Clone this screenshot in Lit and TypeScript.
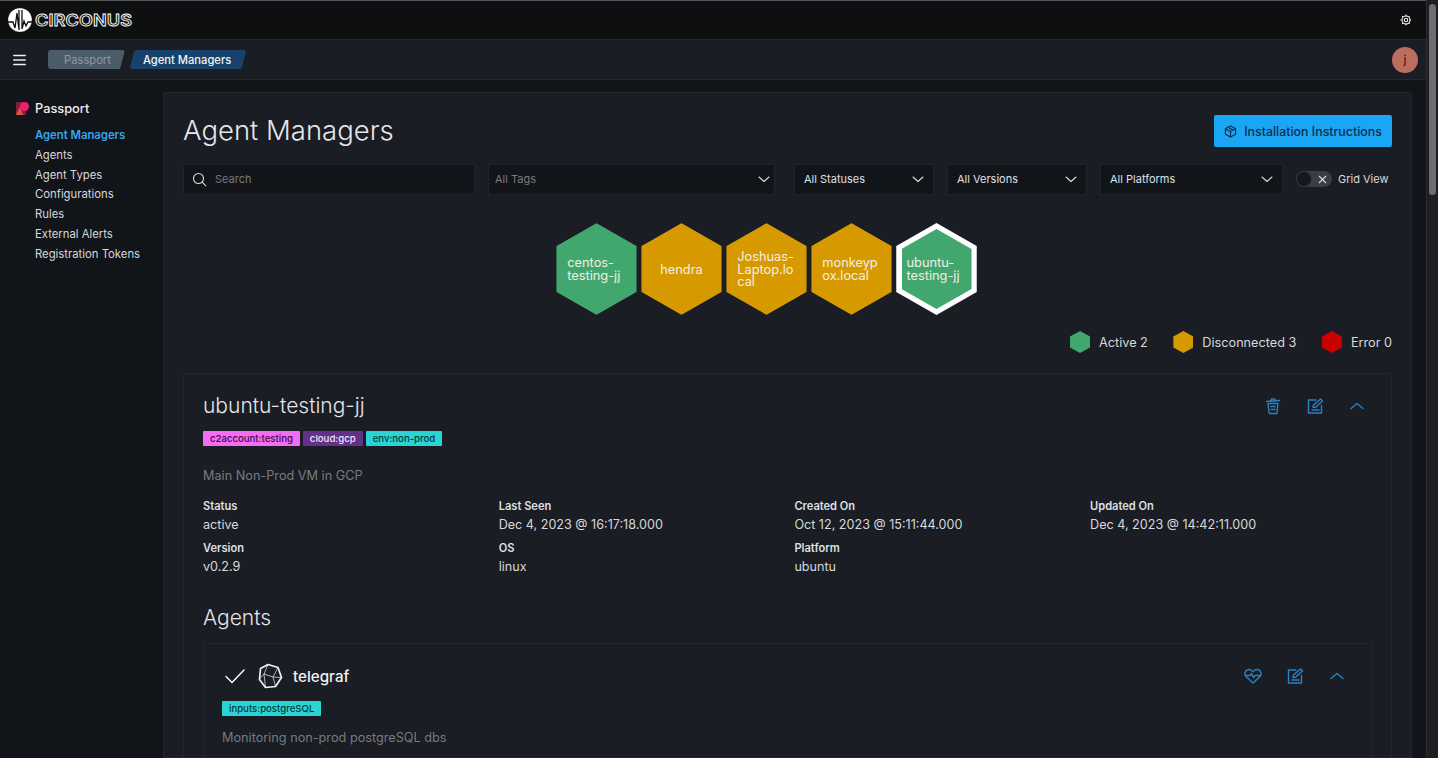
import { LitElement, html, css, svg } from 'lit';
import { customElement } from 'lit/decorators.js';

interface Hex {
  name: string;
  color: string;
  selected?: boolean;
}

const hexes: Hex[] = [
  { name: 'centos-testing-jj', color: '#41a76f' },
  { name: 'hendra', color: '#d69a00' },
  { name: 'Joshuas-Laptop.local', color: '#d69a00' },
  { name: 'monkeypox.local', color: '#d69a00' },
  { name: 'ubuntu-testing-jj', color: '#41a76f', selected: true },
];

const legend = [
  { label: 'Active 2', color: '#41a76f' },
  { label: 'Disconnected 3', color: '#d69a00' },
  { label: 'Error 0', color: '#c90000' },
];

const navItems = ['Agent Managers', 'Agents', 'Agent Types', 'Configurations', 'Rules', 'External Alerts', 'Registration Tokens'];

const chevronDown = svg`<path d="M2 5l5 4.500L12 5" fill="none" stroke="currentColor" stroke-width="1.1" stroke-linecap="round" stroke-linejoin="round"/>`;

@customElement('app-root')
export class AppRoot extends LitElement {
  static styles = css`
    :host {
      display: flex;
      width: 1438px;
      height: 758px;
      overflow: hidden;
      background: #111418;
      color: #e4e6ea;
      font-family: Inter, 'Liberation Sans', sans-serif;
      font-size: 13px;
    }
    svg { display: block; flex: none; }
    .page { flex: 1; min-width: 0; display: flex; flex-direction: column; }
    .scrollbar { width: 12px; flex: none; background: #1c1e22; border-left: 1px solid #2a2c30; padding: 4px 2px 0 2px; box-sizing: border-box; }
    .thumb { width: 7px; height: 191px; border-radius: 4px; background: #6b6d70; }

    .topbar { height: 40px; flex: none; box-sizing: border-box; display: flex; align-items: center; justify-content: space-between; padding: 0 14px 0 7px; background: #0e0f11; border-top: 1px solid #55575a; border-bottom: 1px solid #24262b; }
    .logo { display: flex; align-items: center; gap: 2px; }
    .wordmark { font-size: 16px; font-weight: 600; letter-spacing: 0.1px; color: #0e0f11; -webkit-text-stroke: 0.85px #fff; line-height: 1; transform: scaleX(1.13); transform-origin: left center; }

    .crumbbar { height: 40px; flex: none; box-sizing: border-box; display: flex; align-items: center; justify-content: space-between; padding: 0 8px 0 13px; background: #1a1d23; border-bottom: 1px solid #24262b; }
    .crumbs-wrap { display: flex; align-items: center; }
    .crumbs { display: flex; align-items: center; gap: 7px; margin-left: 22px; }
    .crumb { height: 19px; display: flex; align-items: center; justify-content: center; font-size: 11.2px; border-radius: 3px; }
    .crumb.parent { width: 77px; padding-left: 2px; box-sizing: border-box; background: #4b5c69; color: #8e98a0; clip-path: polygon(0 0, 100% 0, calc(100% - 5px) 100%, 0 100%); }
    .crumb.current { width: 112px; padding-right: 2px; box-sizing: border-box; background: #17426b; color: #f1f3f5; font-weight: 500; transform: skewX(-14deg); }
    .crumb.current span { transform: skewX(14deg); }
    .avatar { width: 26px; height: 26px; border-radius: 50%; background: #bb6e5e; color: #2a1510; display: flex; align-items: center; justify-content: center; font-size: 12px; }

    .body { flex: 1; min-height: 0; display: flex; }
    .sidebar { width: 163px; flex: none; box-sizing: border-box; padding: 18px 0 0 15px; }
    .side-title { display: flex; align-items: center; gap: 5px; height: 20px; font-size: 12.8px; font-weight: 500; color: #eceef0; margin-bottom: 7px; }
    .nav { display: flex; flex-direction: column; padding-left: 20px; }
    .nav a { height: 19.85px; display: flex; align-items: center; font-size: 11.3px; color: #d6d8dc; white-space: nowrap; }
    .nav a.active { color: #37a5ec; font-weight: 600; }

    .panel { width: 1249px; flex: none; margin-top: 12px; box-sizing: border-box; padding: 20px 19px 0 19px; background: #1a1d23; border: 1px solid #24272c; border-radius: 3px 3px 0 0; }
    .head { display: flex; justify-content: space-between; align-items: flex-start; height: 51px; }
    h1 { margin: 0; font-size: 27.5px; font-weight: 300; line-height: 34px; color: #e4e6ea; }
    .install { width: 178px; height: 32px; margin-top: 2px; box-sizing: border-box; border-radius: 2px; display: flex; align-items: center; justify-content: center; gap: 7px; background: #1aa5f5; color: #0c2f4f; font-size: 12.4px; font-weight: 500; }

    .filters { display: flex; align-items: center; height: 31px; }
    .field { height: 31px; box-sizing: border-box; display: flex; align-items: center; justify-content: space-between; padding: 0 8px 1px 8px; background: #111418; border: 1px solid #212429; font-size: 11px; color: #dfe1e4; white-space: nowrap; flex: none; }
    .field.muted { color: #777b81; }
    .search { width: 292px; justify-content: flex-start; gap: 8px; margin-right: 13px; }
    .tags { width: 287px; padding-left: 6px; padding-right: 3px; margin-right: 19px; }
    .statuses { width: 140px; padding-left: 9px; margin-right: 13px; }
    .versions { width: 140px; padding-left: 9px; margin-right: 13px; }
    .platforms { width: 183px; padding-left: 9px; margin-right: 13px; }
    .toggle { width: 36px; height: 16px; flex: none; box-sizing: border-box; border-radius: 8px; background: #3a3d43; position: relative; display: flex; align-items: center; justify-content: flex-end; padding-right: 5px; margin-right: 6px; margin-bottom: 1px; color: #d9dbde; }
    .knob { position: absolute; left: 0; top: 0; width: 16px; height: 16px; box-sizing: border-box; border-radius: 50%; background: #15181c; border: 1px solid #33363b; }
    .grid-label { font-size: 11px; color: #d9dbde; white-space: nowrap; margin-bottom: 1px; }

    .hexes { display: flex; justify-content: center; gap: 4.5px; margin-top: 28px; padding-right: 42px; }
    .hex { width: 80.5px; height: 92px; flex: none; clip-path: polygon(50% 0, 100% 25%, 100% 75%, 50% 100%, 0 75%, 0 25%); display: flex; align-items: center; justify-content: center; }
    .hex.selected { background: #fff; }
    .hex-inner { width: 100%; height: 100%; box-sizing: border-box; clip-path: polygon(50% 0, 100% 25%, 100% 75%, 50% 100%, 0 75%, 0 25%); display: flex; align-items: center; padding: 2px 11px 0 11px; font-size: 12.8px; line-height: 12.8px; color: #f2efe2; overflow-wrap: anywhere; }
    .hex.selected .hex-inner { width: 70px; height: 80px; padding: 2px 5px 0 5px; }
    .hex.center .hex-inner { justify-content: center; }
    .hex-label { display: block; width: 100%; }
    .hex.center .hex-label { text-align: center; }

    .legend { display: flex; justify-content: flex-end; align-items: center; gap: 25.5px; height: 22px; margin-top: 16px; }
    .legend-item { display: flex; align-items: center; gap: 9px; font-size: 12.7px; color: #d7d9dd; }
    .legend-hex { width: 20px; height: 22px; clip-path: polygon(50% 0, 100% 25%, 100% 75%, 50% 100%, 0 75%, 0 25%); }

    .card { margin-top: 20px; border: 1px solid #24272c; border-radius: 3px; padding: 0 19px; }
    .card-head { display: flex; justify-content: space-between; align-items: center; height: 31px; margin-top: 16px; }
    h2 { margin: 0; font-size: 21px; font-weight: 300; line-height: 31px; color: #e4e6ea; }
    .actions { display: flex; align-items: center; gap: 24px; color: #2a83c4; padding-right: 6px; }
    .chips { display: flex; gap: 3px; margin-top: 10px; }
    .chip { height: 15px; padding: 0 7px; display: flex; align-items: center; border-radius: 1px; font-size: 9.6px; font-weight: 500; white-space: nowrap; }
    .chip.pink { background: #f56df5; color: #3d0d3d; }
    .chip.purple { background: #63308a; color: #f0e6f7; }
    .chip.teal { background: #2bd4d4; color: #053838; }
    .desc { margin-top: 22px; font-size: 12.7px; line-height: 16px; color: #777b81; }
    .meta { display: grid; grid-template-columns: repeat(4, 295.7px); row-gap: 8px; margin-top: 14px; }
    .meta-label { font-size: 11.1px; font-weight: 600; line-height: 16px; color: #dfe1e4; }
    .meta-value { margin-top: 3px; font-size: 12.6px; line-height: 15px; color: #d7d9dd; }
    .agents-title { margin-top: 29px; font-size: 21px; font-weight: 300; line-height: 30px; color: #e4e6ea; }

    .agent { margin: 10px -1px 0 0; border: 1px solid #24272c; border-radius: 3px 3px 0 0; padding: 0 20px 0 18px; height: 200px; }
    .agent-head { display: flex; justify-content: space-between; align-items: center; height: 32px; margin-top: 16px; }
    .agent-name { display: flex; align-items: center; }
    .agent-name h3 { margin: 0 0 0 10px; font-size: 15.2px; font-weight: 500; color: #f0f1f3; }
    .check { margin-left: 3px; margin-right: 12px; }
    .agent .chips { margin-top: 9px; }
    .agent .desc { margin-top: 14px; }
  `;

  private renderHex(h: Hex) {
    const center = h.name === 'hendra';
    return html`
      <div class="hex ${h.selected ? 'selected' : ''} ${center ? 'center' : ''}">
        <div class="hex-inner" style="background:${h.color}"><span class="hex-label">${h.name}</span></div>
      </div>
    `;
  }

  private renderSelect(label: string, cls: string, muted = false) {
    return html`
      <div class="field ${cls} ${muted ? 'muted' : ''}">
        <span>${label}</span>
        <svg width="14" height="14" viewBox="0 0 14 14" style="color:#d9dbde">${chevronDown}</svg>
      </div>
    `;
  }

  private editIcon() {
    return html`<svg width="18" height="18" viewBox="0 0 18 18" fill="none" stroke="currentColor" stroke-width="1.4" stroke-linejoin="round" stroke-linecap="round">
      <path d="M10 3H2.500v13h13V8.500"/><path d="M7 10.500l.5-2.500 7-6 2 2-7 6.200z"/><path d="M6 13h7"/>
    </svg>`;
  }

  private chevronUp() {
    return html`<svg width="18" height="18" viewBox="0 0 18 18" fill="none" stroke="currentColor" stroke-width="1.4" stroke-linecap="round" stroke-linejoin="round"><path d="M3 11.500l6-5 6 5"/></svg>`;
  }

  render() {
    return html`
      <div class="page">
        <div class="topbar">
          <div class="logo">
            <svg width="26" height="26" viewBox="0 0 26 26">
              <circle cx="13" cy="13" r="12" fill="#fff" stroke="#0e0f11" stroke-width="0.6" stroke-dasharray="1 1"/>
              <path d="M1 15h5l2 6 2-15 2 17V3M15 3v19l2-8 2 5 2-4h4" fill="none" stroke="#0e0f11" stroke-width="1.300"/>
            </svg>
            <span class="wordmark">CIRCONUS</span>
          </div>
          <svg width="12" height="12" viewBox="0 0 14 14" fill="none" stroke="#fff" stroke-width="1.2">
            <circle cx="7" cy="7" r="4.600"/><circle cx="7" cy="7" r="2"/>
            <path d="M7 .5v2M7 11.500v2M.5 7h2M11.500 7h2M2.400 2.400l1.400 1.400M10.200 10.200l1.400 1.400M2.400 11.600l1.400-1.400M10.200 3.800l1.400-1.400" stroke-dasharray="1.500 0.5"/>
          </svg>
        </div>

        <div class="crumbbar">
          <div class="crumbs-wrap">
            <svg width="13" height="12" viewBox="0 0 13 12" stroke="#eceef0" stroke-width="1.6" stroke-linecap="round"><path d="M.8 1.500h11.400M.8 6h11.400M.8 10.500h11.400"/></svg>
            <div class="crumbs">
              <div class="crumb parent"><span>Passport</span></div>
              <div class="crumb current"><span>Agent Managers</span></div>
            </div>
          </div>
          <div class="avatar">j</div>
        </div>

        <div class="body">
          <aside class="sidebar">
            <div class="side-title">
              <svg width="15" height="15" viewBox="0 0 15 15">
                <rect x="1" y="1" width="10" height="13" rx="1" fill="#7c1f3f"/>
                <path d="M1 14l3.500-8 4 8z" fill="#e0553a"/>
                <circle cx="9.500" cy="5.500" r="4.500" fill="#ee1f6b"/>
              </svg>
              Passport
            </div>
            <nav class="nav">
              ${navItems.map((item, i) => html`<a class="${i === 0 ? 'active' : ''}">${item}</a>`)}
            </nav>
          </aside>

          <main class="panel">
            <div class="head">
              <h1>Agent Managers</h1>
              <div class="install">
                <svg width="13" height="13" viewBox="0 0 14 14" fill="none" stroke="currentColor" stroke-width="1.2" stroke-linejoin="round"><path d="M7 1l5.500 3v6L7 13l-5.500-3V4zM1.500 4L7 7l5.500-3M7 7v6M4.200 2.500l5.500 3"/></svg>
                Installation Instructions
              </div>
            </div>

            <div class="filters">
              <div class="field search muted">
                <svg width="15" height="15" viewBox="0 0 15 15" fill="none" stroke="#d9dbde" stroke-width="1.1" stroke-linecap="round"><circle cx="6.500" cy="6.500" r="5"/><path d="M10.200 10.200l3.600 3.600"/></svg>
                <span>Search</span>
              </div>
              ${this.renderSelect('All Tags', 'tags', true)}
              ${this.renderSelect('All Statuses', 'statuses')}
              ${this.renderSelect('All Versions', 'versions')}
              ${this.renderSelect('All Platforms', 'platforms')}
              <div class="toggle">
                <div class="knob"></div>
                <svg width="9" height="9" viewBox="0 0 9 9" stroke="currentColor" stroke-width="1.100"><path d="M1 1l7 7M8 1L1 8"/></svg>
              </div>
              <span class="grid-label">Grid View</span>
            </div>

            <div class="hexes">${hexes.map(h => this.renderHex(h))}</div>

            <div class="legend">
              ${legend.map(l => html`
                <div class="legend-item">
                  <div class="legend-hex" style="background:${l.color}"></div>
                  ${l.label}
                </div>
              `)}
            </div>

            <section class="card">
              <div class="card-head">
                <h2>ubuntu-testing-jj</h2>
                <div class="actions">
                  <svg width="18" height="18" viewBox="0 0 18 18" fill="none" stroke="currentColor" stroke-width="1.400" stroke-linejoin="round" stroke-linecap="round">
                    <path d="M2.500 4.500l13-1M7 3.500L7.500 2h3l.8 1.200M4 6.500h10l-1.200 10H5.200zM6.800 9.500h4.400M7 12.500h4"/>
                  </svg>
                  ${this.editIcon()}
                  ${this.chevronUp()}
                </div>
              </div>
              <div class="chips">
                <span class="chip pink">c2account:testing</span>
                <span class="chip purple">cloud:gcp</span>
                <span class="chip teal">env:non-prod</span>
              </div>
              <div class="desc">Main Non-Prod VM in GCP</div>
              <div class="meta">
                <div><div class="meta-label">Status</div><div class="meta-value">active</div></div>
                <div><div class="meta-label">Last Seen</div><div class="meta-value">Dec 4, 2023 @ 16:17:18.000</div></div>
                <div><div class="meta-label">Created On</div><div class="meta-value">Oct 12, 2023 @ 15:11:44.000</div></div>
                <div><div class="meta-label">Updated On</div><div class="meta-value">Dec 4, 2023 @ 14:42:11.000</div></div>
                <div><div class="meta-label">Version</div><div class="meta-value">v0.2.9</div></div>
                <div><div class="meta-label">OS</div><div class="meta-value">linux</div></div>
                <div><div class="meta-label">Platform</div><div class="meta-value">ubuntu</div></div>
              </div>
              <div class="agents-title">Agents</div>
              <div class="agent">
                <div class="agent-head">
                  <div class="agent-name">
                    <svg class="check" width="20" height="16" viewBox="0 0 20 16" fill="none" stroke="#fff" stroke-width="1.400" stroke-linecap="round" stroke-linejoin="round"><path d="M1 8.500l6 6L19 2"/></svg>
                    <svg width="26" height="26" viewBox="0 0 26 26" fill="none" stroke="#f0f1f3" stroke-linejoin="round">
                      <path d="M11 1.500l10 3 3.500 10-6 9-10 1-6-8 1-11z" stroke-width="1.700"/>
                      <path d="M11 1.500L7 11l9 3 5-9.500M7 11l-3.500 4M16 14l2.500 9.500M16 14l8.500.5M7 11l1.500 13.500" stroke-width="0.7"/>
                    </svg>
                    <h3>telegraf</h3>
                  </div>
                  <div class="actions">
                    <svg width="18" height="16" viewBox="0 0 18 16" fill="none" stroke="currentColor" stroke-width="1.400" stroke-linejoin="round" stroke-linecap="round">
                      <path d="M9 15L2 8.500C0 6 1 2 4.500 1.500 6.500 1.300 8 2.300 9 3.800 10 2.300 11.500 1.300 13.500 1.500 17 2 18 6 16 8.500z"/>
                      <path d="M1.500 7.500H6l1.500-2 2 4 1.500-2h5.500"/>
                    </svg>
                    ${this.editIcon()}
                    ${this.chevronUp()}
                  </div>
                </div>
                <div class="chips"><span class="chip teal">inputs:postgreSQL</span></div>
                <div class="desc">Monitoring non-prod postgreSQL dbs</div>
              </div>
            </section>
          </main>
        </div>
      </div>
      <div class="scrollbar"><div class="thumb"></div></div>
    `;
  }
}

declare global {
  interface HTMLElementTagNameMap {
    'app-root': AppRoot;
  }
}
